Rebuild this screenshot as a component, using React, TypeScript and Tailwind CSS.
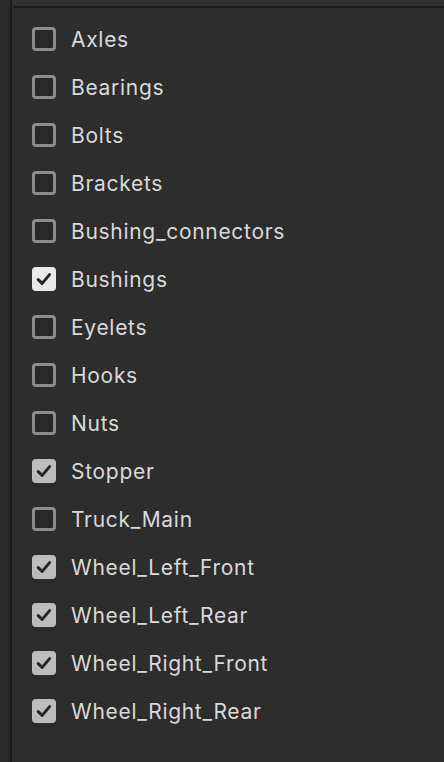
import React from "react";

const items: { name: string; state: "off" | "on" | "active" }[] = [
  { name: "Axles", state: "off" },
  { name: "Bearings", state: "off" },
  { name: "Bolts", state: "off" },
  { name: "Brackets", state: "off" },
  { name: "Bushing_connectors", state: "off" },
  { name: "Bushings", state: "active" },
  { name: "Eyelets", state: "off" },
  { name: "Hooks", state: "off" },
  { name: "Nuts", state: "off" },
  { name: "Stopper", state: "on" },
  { name: "Truck_Main", state: "off" },
  { name: "Wheel_Left_Front", state: "on" },
  { name: "Wheel_Left_Rear", state: "on" },
  { name: "Wheel_Right_Front", state: "on" },
  { name: "Wheel_Right_Rear", state: "on" },
];

function Box({ state }: { state: "off" | "on" | "active" }) {
  if (state === "off") {
    return <div className="w-[24px] h-[24px] rounded-[4px] border-[3px] border-[#8c8c8c] bg-[#282828] shrink-0" />;
  }
  return (
    <div
      className={
        "w-[24px] h-[24px] rounded-[4px] shrink-0 flex items-center justify-center " +
        (state === "active" ? "bg-[#e9e9e9]" : "bg-[#bcbcbc]")
      }
    >
      <svg width="24" height="24" viewBox="0 0 24 24">
        <path d="M6.2 12.6 L10.2 16.4 L17.6 7.6" fill="none" stroke="#262626" strokeWidth="3" strokeLinecap="round" strokeLinejoin="round" />
      </svg>
    </div>
  );
}

export default function App() {
  return (
    <div className="w-[444px] h-[762px] flex bg-[#2d2d2d] overflow-hidden" style={{ fontFamily: "Inter, 'Noto Sans', sans-serif" }}>
      <div className="w-[10px] h-full bg-[#2a2a2a]" />
      <div className="w-[2px] h-full bg-[#1b1b1b]" />
      <div className="flex-1 flex flex-col">
        <div className="h-[6px] bg-[#323232]" />
        <div className="h-[2px] bg-[#1c1c1c] ml-[2px]" />
        <div className="flex flex-col pt-[7px] pl-[20px]">
          {items.map((it) => (
            <div key={it.name} className="h-[48px] flex items-center gap-[15px]">
              <Box state={it.state} />
              <span className="text-[21px] text-[#d9d9d9] leading-none tracking-[0.7px] pt-[1px]">{it.name}</span>
            </div>
          ))}
        </div>
      </div>
    </div>
  );
}
